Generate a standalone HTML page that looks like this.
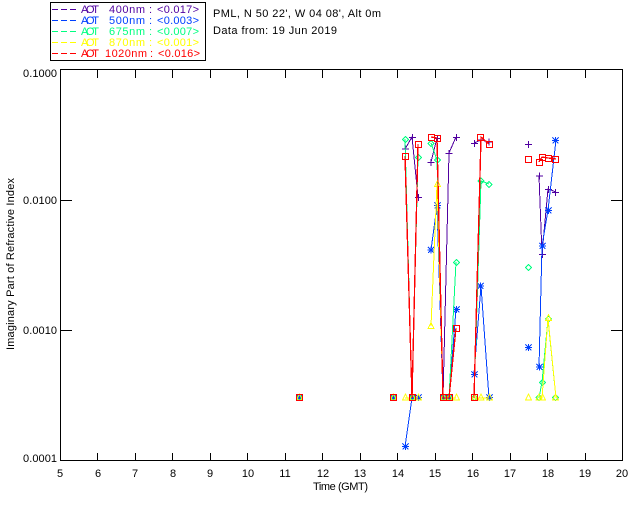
<!DOCTYPE html>
<html><head><meta charset="utf-8"><style>
html,body{margin:0;padding:0;background:#fff;width:640px;height:512px;overflow:hidden}
svg{display:block}
text{font-family:"Liberation Sans",sans-serif;font-size:11px;fill:#000}
.ln{fill:none}
.ax{stroke:#000;stroke-width:1;fill:none}
.P{stroke:#5000a0;fill:none}.B{stroke:#0040ff;fill:none}.G{stroke:#00ff80;fill:none}.Y{stroke:#ffff00;fill:none}.R{stroke:#ff0000;fill:none}
</style></head><body>
<svg width="640" height="512" viewBox="0 0 640 512" xmlns="http://www.w3.org/2000/svg" shape-rendering="crispEdges">
<defs>
<path id="p" d="M-3.5 0H3.5M0 -3.5V3.5"/>
<g id="s"><path d="M-3.5 0H3.5M0 -3.5V3.5M-3 -3L3 3M-3 3L3 -3"/><rect x="-1.5" y="-1.5" width="3" height="3" fill="#0040ff" stroke="none"/></g>
<path id="d" d="M0 -3L3 0L0 3L-3 0Z"/>
<path id="t" d="M0 -3.5L3 2.5H-3Z"/>
<rect id="q" x="-3" y="-3" width="6" height="6"/>
</defs>

<!-- legend -->
<rect class="ax" x="50.5" y="2.5" width="155" height="58"/>
<g class="ln" stroke-width="1" stroke-dasharray="6 3">
<path stroke="#5000a0" d="M52 9.5H76"/><path stroke="#0040ff" d="M52 20.5H76"/><path stroke="#00ff80" d="M52 31.5H76"/><path stroke="#ffff00" d="M52 42.5H76"/><path stroke="#ff0000" d="M52 53.5H76"/>
</g>
<g style="fill:#5000a0"><text style="fill:inherit" x="81" y="13" textLength="18">AOT</text><text style="fill:inherit" x="109" y="13" textLength="36">400nm</text><text style="fill:inherit" x="149" y="13">:</text><text style="fill:inherit" x="157" y="13" textLength="42">&lt;0.017&gt;</text></g>
<g style="fill:#0040ff"><text style="fill:inherit" x="81" y="24" textLength="18">AOT</text><text style="fill:inherit" x="109" y="24" textLength="36">500nm</text><text style="fill:inherit" x="149" y="24">:</text><text style="fill:inherit" x="157" y="24" textLength="42">&lt;0.003&gt;</text></g>
<g style="fill:#00ff80"><text style="fill:inherit" x="81" y="35" textLength="18">AOT</text><text style="fill:inherit" x="109" y="35" textLength="36">675nm</text><text style="fill:inherit" x="149" y="35">:</text><text style="fill:inherit" x="157" y="35" textLength="42">&lt;0.007&gt;</text></g>
<g style="fill:#ffff00"><text style="fill:inherit" x="81" y="46" textLength="18">AOT</text><text style="fill:inherit" x="109" y="46" textLength="36">870nm</text><text style="fill:inherit" x="149" y="46">:</text><text style="fill:inherit" x="157" y="46" textLength="42">&lt;0.001&gt;</text></g>
<g style="fill:#ff0000"><text style="fill:inherit" x="81" y="57" textLength="18">AOT</text><text style="fill:inherit" x="105" y="57" textLength="42">1020nm</text><text style="fill:inherit" x="150" y="57">:</text><text style="fill:inherit" x="158" y="57" textLength="42">&lt;0.016&gt;</text></g>

<text x="213" y="17" textLength="168">PML, N 50 22', W 04 08', Alt 0m</text>
<text x="213" y="34" textLength="124">Data from: 19 Jun 2019</text>

<!-- axes -->
<rect class="ax" x="60.5" y="69.5" width="562" height="391"/>
<path class="ax" d="M97.5 70V78M135.5 70V78M172.5 70V78M210.5 70V78M247.5 70V78M285.5 70V78M322.5 70V78M360.5 70V78M397.5 70V78M435.5 70V78M472.5 70V78M510.5 70V78M547.5 70V78M585.5 70V78
M97.5 461V453M135.5 461V453M172.5 461V453M210.5 461V453M247.5 461V453M285.5 461V453M322.5 461V453M360.5 461V453M397.5 461V453M435.5 461V453M472.5 461V453M510.5 461V453M547.5 461V453M585.5 461V453
M61 200.5H72M61 330.5H72M622 200.5H611M622 330.5H611"/>
<text x="23" y="77" textLength="34">0.1000</text>
<text x="23" y="204" textLength="34">0.0100</text>
<text x="23" y="334" textLength="34">0.0010</text>
<text x="23" y="462" textLength="34">0.0001</text>
<g text-anchor="middle">
<text x="60" y="477">5</text><text x="98" y="477">6</text><text x="135" y="477">7</text><text x="173" y="477">8</text><text x="210" y="477">9</text>
<text x="248" y="477">10</text><text x="285" y="477">11</text><text x="323" y="477">12</text><text x="360" y="477">13</text><text x="398" y="477">14</text>
<text x="435" y="477">15</text><text x="473" y="477">16</text><text x="510" y="477">17</text><text x="548" y="477">18</text><text x="585" y="477">19</text><text x="622" y="477">20</text>
</g>
<text x="313" y="490" textLength="55">Time (GMT)</text>
<text transform="translate(14 350) rotate(-90)" x="0" y="0" textLength="172">Imaginary Part of Refractive Index</text>

<!-- purple -->
<g class="P" stroke-width="1">
<polyline class="ln" points="405,149 412,137 418,197"/>
<polyline class="ln" points="431,162 437,138 443,398 449,153 456,137"/>
<polyline class="ln" points="474,143 481,140 489,142"/>
<polyline class="ln" points="539,176 542,254 548,189 556,192"/>
<use href="#p" x="405.5" y="149"/><use href="#p" x="412.5" y="137.5"/><use href="#p" x="418.5" y="197.5"/><use href="#p" x="431" y="162.5"/><use href="#p" x="437.5" y="138.5"/><use href="#p" x="449" y="153.5"/><use href="#p" x="456.5" y="137.5"/><use href="#p" x="474.5" y="143.5"/><use href="#p" x="481" y="140"/><use href="#p" x="489" y="142"/><use href="#p" x="528.5" y="144.5"/><use href="#p" x="539.5" y="176"/><use href="#p" x="542.5" y="254.5"/><use href="#p" x="548.5" y="189.5"/><use href="#p" x="555.5" y="192.5"/>
</g>
<!-- blue -->
<g class="B" stroke-width="1">
<polyline class="ln" points="405,447 412,398 418,398"/>
<polyline class="ln" points="431,250 437,206 443,398 449,398 456,309"/>
<polyline class="ln" points="474,374 481,286 489,398"/>
<polyline class="ln" points="539,367 542,246 548,210 556,140"/>
<use href="#s" x="405.5" y="446.5"/><use href="#s" x="418.5" y="397.5"/><use href="#s" x="431" y="250"/><use href="#s" x="437.5" y="205.5"/><use href="#s" x="456.5" y="309.5"/><use href="#s" x="474.5" y="374.5"/><use href="#s" x="480.5" y="286"/><use href="#s" x="489.5" y="397.5"/><use href="#s" x="528.5" y="347.5"/><use href="#s" x="539.5" y="367"/><use href="#s" x="542.5" y="246"/><use href="#s" x="548.5" y="210.5"/><use href="#s" x="555.5" y="140.5"/>
</g>
<!-- green -->
<g class="G" stroke-width="1">
<polyline class="ln" points="405,139 412,398 418,157"/>
<polyline class="ln" points="431,143 437,160 443,398 449,398 456,262"/>
<polyline class="ln" points="474,398 481,181 489,184"/>
<polyline class="ln" points="539,398 542,382 548,319 556,398"/>
<use href="#d" x="405.5" y="139.5"/><use href="#d" x="418.5" y="157.5"/><use href="#d" x="431" y="143.5"/><use href="#d" x="437.5" y="160"/><use href="#d" x="456.5" y="262.5"/><use href="#d" x="481" y="181"/><use href="#d" x="489" y="184.5"/><use href="#d" x="528.5" y="267.5"/><use href="#d" x="548.5" y="319"/><use href="#d" x="542.5" y="382.5"/><use href="#d" x="539" y="397.5"/><use href="#d" x="555.5" y="397.5"/>
</g>
<!-- yellow -->
<g class="Y" stroke-width="1">
<polyline class="ln" points="431,326 437,184 443,398 449,398 456,398"/>
<polyline class="ln" points="539,398 542,398 548,318 556,398"/>
<path class="ln" d="M405 398H418M474 398H489"/>
<use href="#t" x="405.5" y="397.5"/><use href="#t" x="418.5" y="397.5"/><use href="#t" x="431" y="326"/><use href="#t" x="437.5" y="184"/><use href="#t" x="456.5" y="397.5"/><use href="#t" x="481" y="397.5"/><use href="#t" x="489.5" y="397.5"/><use href="#t" x="528.5" y="397.5"/><use href="#t" x="539" y="397.5"/><use href="#t" x="542.5" y="397.5"/><use href="#t" x="548.5" y="318"/><use href="#t" x="555.5" y="397.5"/>
</g>
<!-- stacked points -->
<g stroke-width="1">
<g><use class="B" href="#s" x="299.5" y="397.5"/><use class="G" href="#d" x="299.5" y="397.5"/><use class="Y" href="#t" x="299.5" y="397.5"/></g>
<g><use class="B" href="#s" x="393.5" y="397.5"/><use class="G" href="#d" x="393.5" y="397.5"/><use class="Y" href="#t" x="393.5" y="397.5"/></g>
<g><use class="B" href="#s" x="412.5" y="397.5"/><use class="G" href="#d" x="412.5" y="397.5"/><use class="Y" href="#t" x="412.5" y="397.5"/></g>
<g><use class="B" href="#s" x="443.5" y="397.5"/><use class="G" href="#d" x="443.5" y="397.5"/><use class="Y" href="#t" x="443.5" y="397.5"/></g>
<g><use class="B" href="#s" x="449.5" y="397.5"/><use class="G" href="#d" x="449.5" y="397.5"/><use class="Y" href="#t" x="449.5" y="397.5"/></g>
<g><use class="G" href="#d" x="474.5" y="397.5"/><use class="Y" href="#t" x="474.5" y="397.5"/></g>
</g>
<!-- red -->
<g class="R" stroke-width="1.3">
<polyline class="ln" points="405,156 412,398 418,144"/>
<polyline class="ln" points="431,137 437,138 443,398 449,398 456,328"/>
<polyline class="ln" points="474,398 481,137 489,144"/>
<polyline class="ln" points="539,162 542,157 548,158 556,159"/>
</g>
<g class="R" stroke-width="1">
<use href="#q" x="299.5" y="397.5"/><use href="#q" x="393.5" y="397.5"/><use href="#q" x="405.5" y="156.5"/><use href="#q" x="412.5" y="397.5"/><use href="#q" x="418.5" y="144.5"/><use href="#q" x="431.5" y="137.5"/><use href="#q" x="437.5" y="138.5"/><use href="#q" x="443.5" y="397.5"/><use href="#q" x="449.5" y="397.5"/><use href="#q" x="456.5" y="328.5"/><use href="#q" x="474.5" y="397.5"/><use href="#q" x="480.5" y="137.5"/><use href="#q" x="489.5" y="144.5"/><use href="#q" x="528.5" y="159.5"/><use href="#q" x="539.5" y="162.5"/><use href="#q" x="542.5" y="157.5"/><use href="#q" x="548.5" y="158.5"/><use href="#q" x="555.5" y="159.5"/>
</g>
</svg>
</body></html>
